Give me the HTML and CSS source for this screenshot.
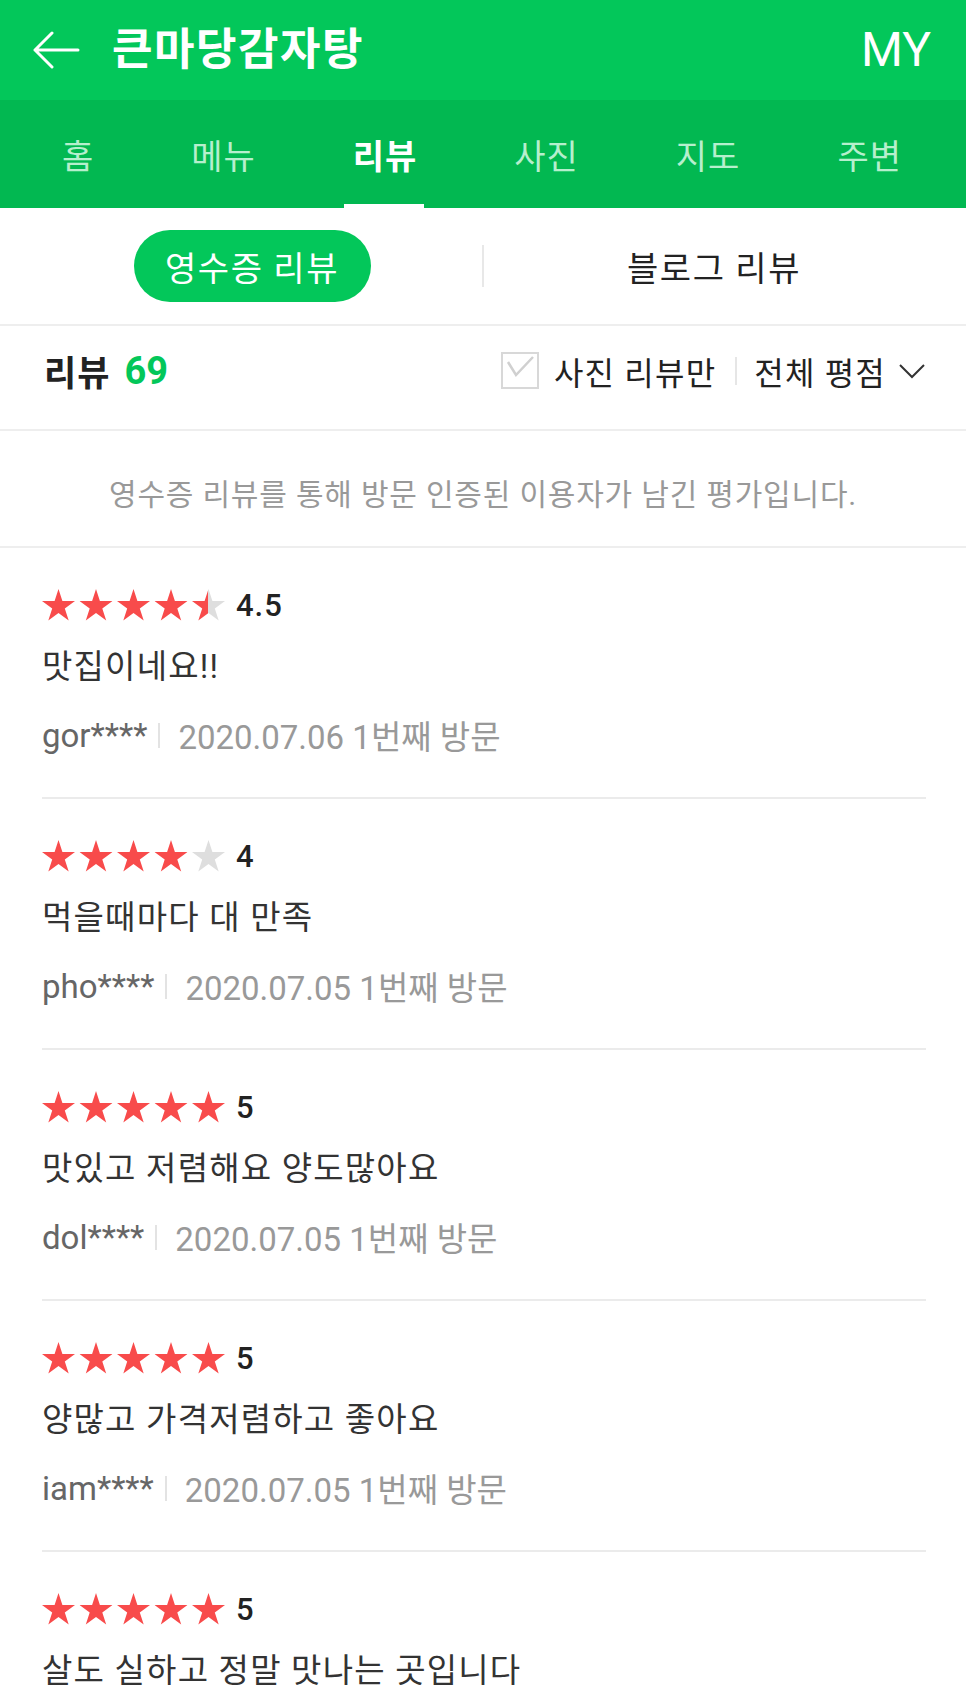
FILE: index.html
```html
<!DOCTYPE html>
<html lang="ko">
<head>
<meta charset="utf-8">
<title>큰마당감자탕 리뷰</title>
<link rel="stylesheet" href="styles.css">
</head>
<body>
<svg class="defs" width="0" height="0" aria-hidden="true">
  <defs>
    <symbol id="star" viewBox="0 0 33 32"><polygon points="16.5,0 20.4,11.99 33,11.99 22.81,19.4 26.7,31.39 16.5,23.98 6.3,31.39 10.19,19.4 0,11.99 12.6,11.99"/></symbol>
    <linearGradient id="half"><stop offset="50%" stop-color="#f84b4b"/><stop offset="50%" stop-color="#dedede"/></linearGradient>
  </defs>
</svg>
<div class="screen">
  <header class="appbar">
    <svg class="back" viewBox="0 0 48 38"><path d="M46 19H3M20 2L3 19l17 17" fill="none" stroke="#fff" stroke-width="3" stroke-linecap="round" stroke-linejoin="round"/></svg>
    <h1 class="title">큰마당감자탕</h1>
    <span class="my">MY</span>
  </header>
  <nav class="tabs">
    <a class="tab">홈</a>
    <a class="tab">메뉴</a>
    <a class="tab active">리뷰</a>
    <a class="tab">사진</a>
    <a class="tab">지도</a>
    <a class="tab">주변</a>
  </nav>
  <div class="segment">
    <div class="seg-cell"><span class="pill">영수증 리뷰</span></div>
    <span class="seg-div"></span>
    <div class="seg-cell"><span class="seg-label">블로그 리뷰</span></div>
  </div>
  <div class="review-head">
    <div class="count-wrap"><span class="count-label">리뷰</span><span class="count">69</span></div>
    <div class="filters">
      <svg class="checkbox" viewBox="0 0 38 37"><rect x="1" y="1" width="36" height="35" fill="#fff" stroke="#d8d8d8" stroke-width="2"/><polyline points="7,10 15,23 32,5" fill="none" stroke="#d0d0d0" stroke-width="2.5"/></svg>
      <span class="filter-label">사진 리뷰만</span>
      <span class="filter-div"></span>
      <span class="filter-label">전체 평점</span>
      <svg class="chevron" viewBox="0 0 28 16"><path d="M2 2l12 12L26 2" fill="none" stroke="#333" stroke-width="2"/></svg>
    </div>
  </div>
  <p class="notice">영수증 리뷰를 통해 방문 인증된 이용자가 남긴 평가입니다.</p>
  <ul class="reviews">
    <li class="review">
      <div class="rating">
        <svg class="stars" viewBox="0 0 183 32"><use href="#star" x="0" width="33" height="32" class="on"/><use href="#star" x="37.5" width="33" height="32" class="on"/><use href="#star" x="75" width="33" height="32" class="on"/><use href="#star" x="112.5" width="33" height="32" class="on"/><use href="#star" x="150" width="33" height="32" class="half"/></svg>
        <span class="score">4.5</span>
      </div>
      <p class="text">맛집이네요!!</p>
      <div class="meta"><span class="user">gor****</span><span class="meta-div"></span><span class="date">2020.07.06 1번째 방문</span></div>
    </li>
    <li class="review">
      <div class="rating">
        <svg class="stars" viewBox="0 0 183 32"><use href="#star" x="0" width="33" height="32" class="on"/><use href="#star" x="37.5" width="33" height="32" class="on"/><use href="#star" x="75" width="33" height="32" class="on"/><use href="#star" x="112.5" width="33" height="32" class="on"/><use href="#star" x="150" width="33" height="32" class="off"/></svg>
        <span class="score">4</span>
      </div>
      <p class="text">먹을때마다 대 만족</p>
      <div class="meta"><span class="user">pho****</span><span class="meta-div"></span><span class="date">2020.07.05 1번째 방문</span></div>
    </li>
    <li class="review">
      <div class="rating">
        <svg class="stars" viewBox="0 0 183 32"><use href="#star" x="0" width="33" height="32" class="on"/><use href="#star" x="37.5" width="33" height="32" class="on"/><use href="#star" x="75" width="33" height="32" class="on"/><use href="#star" x="112.5" width="33" height="32" class="on"/><use href="#star" x="150" width="33" height="32" class="on"/></svg>
        <span class="score">5</span>
      </div>
      <p class="text">맛있고 저렴해요 양도많아요</p>
      <div class="meta"><span class="user">dol****</span><span class="meta-div"></span><span class="date">2020.07.05 1번째 방문</span></div>
    </li>
    <li class="review">
      <div class="rating">
        <svg class="stars" viewBox="0 0 183 32"><use href="#star" x="0" width="33" height="32" class="on"/><use href="#star" x="37.5" width="33" height="32" class="on"/><use href="#star" x="75" width="33" height="32" class="on"/><use href="#star" x="112.5" width="33" height="32" class="on"/><use href="#star" x="150" width="33" height="32" class="on"/></svg>
        <span class="score">5</span>
      </div>
      <p class="text">양많고 가격저렴하고 좋아요</p>
      <div class="meta"><span class="user">iam****</span><span class="meta-div"></span><span class="date">2020.07.05 1번째 방문</span></div>
    </li>
    <li class="review">
      <div class="rating">
        <svg class="stars" viewBox="0 0 183 32"><use href="#star" x="0" width="33" height="32" class="on"/><use href="#star" x="37.5" width="33" height="32" class="on"/><use href="#star" x="75" width="33" height="32" class="on"/><use href="#star" x="112.5" width="33" height="32" class="on"/><use href="#star" x="150" width="33" height="32" class="on"/></svg>
        <span class="score">5</span>
      </div>
      <p class="text">살도 실하고 정말 맛나는 곳입니다</p>
    </li>
  </ul>
</div>
</body>
</html>
```
FILE: styles.css
```css
* { box-sizing: border-box; margin: 0; padding: 0; }
body { margin: 0; background: #fff; color: #222; font-family: Roboto, "Noto Sans CJK KR", sans-serif; }
.defs { display: block; width: 0; height: 0; overflow: hidden; }
.screen { width: 966px; height: 1699px; overflow: hidden; background: #fff; }

.appbar { height: 100px; background: #03c75a; color: #fff; display: flex; align-items: center; padding: 0 35px 0 32px; }
.back { width: 48px; height: 38px; flex: none; }
.title { flex: 1; margin-left: 32px; font-size: 44px; font-weight: 700; line-height: 1; letter-spacing: 1.5px; }
.my { font-size: 48px; font-weight: 400; line-height: 1; }

.tabs { height: 108px; background: #02b851; display: flex; justify-content: space-between; padding: 0 64px 0 62px; }
.tab { position: relative; display: flex; align-items: center; height: 100%; font-size: 34px; letter-spacing: 1px; color: #b6efcd; text-decoration: none; }
.tab.active { color: #fff; font-weight: 700; }
.tab.active::after { content: ""; position: absolute; left: -9px; right: -7px; bottom: 0; height: 4px; background: #fff; }

.segment { height: 118px; border-bottom: 2px solid #eeeeee; display: flex; align-items: center; padding: 0 22px; }
.seg-cell { flex: 1; display: flex; justify-content: center; }
.pill { width: 237px; height: 72px; border-radius: 36px; background: #03c75a; color: #fff; font-size: 34px; letter-spacing: 1.5px; display: flex; align-items: center; justify-content: center; }
.seg-div { width: 2px; height: 42px; background: #e8e8e8; }
.seg-label { font-size: 34px; letter-spacing: 1.5px; color: #222; }

.review-head { height: 105px; border-bottom: 2px solid #eeeeee; display: flex; align-items: center; justify-content: space-between; padding: 0 40px 14px 44px; }
.count-wrap { display: flex; align-items: center; }
.count-label { font-size: 35px; font-weight: 700; letter-spacing: 1px; color: #222; }
.count { font-size: 38px; font-weight: 700; color: #03c75a; margin-left: 14px; }
.filters { display: flex; align-items: center; }
.checkbox { width: 38px; height: 37px; }
.filter-label { font-size: 32px; letter-spacing: 1.2px; color: #222; }
.checkbox + .filter-label { margin-left: 15px; }
.filter-div { width: 2px; height: 28px; background: #e6e6e6; margin: 0 17px 0 19px; }
.chevron { width: 28px; height: 16px; margin-left: 12px; }

.notice { height: 117px; border-bottom: 2px solid #eeeeee; display: flex; align-items: center; justify-content: center; padding-top: 6px; font-size: 30px; letter-spacing: 0.8px; color: #999; }

.reviews { list-style: none; }
.review { margin: 0 40px 0 42px; padding: 37px 0 40px; border-bottom: 2px solid #ebebeb; }
.rating { display: flex; align-items: center; height: 40px; }
.stars { width: 183px; height: 32px; }
.stars .on { fill: #f84b4b; }
.stars .off { fill: #dedede; }
.stars .half { fill: url(#half); }
.score { margin-left: 11px; font-size: 31px; letter-spacing: 1px; font-weight: 500; color: #222; }
.text { margin-top: 20px; font-size: 33px; letter-spacing: 1.2px; line-height: 44px; color: #333; }
.meta { margin-top: 24px; height: 44px; display: flex; align-items: center; font-size: 33px; }
.user { color: #666; }
.meta-div { width: 2px; height: 25px; background: #e3e3e3; margin: 0 18px 0 11px; }
.date { color: #999; }
```
